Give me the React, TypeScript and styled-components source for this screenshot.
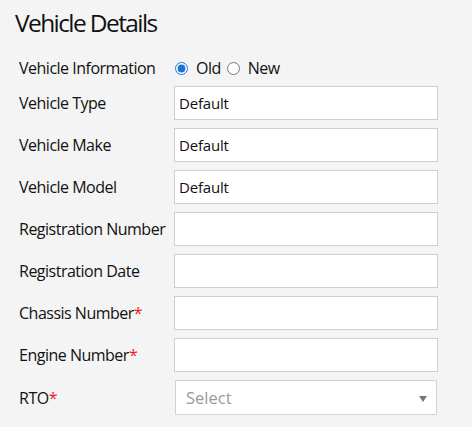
import React from "react";
import styled, { createGlobalStyle } from "styled-components";

const Global = createGlobalStyle`
  html, body { margin: 0; padding: 0; background: #f4f4f4; }
  body { font-family: "Open Sans", "Noto Sans", sans-serif; color: #111; }
`;

const Page = styled.div`
  padding: 6px 16px 0 15px;
`;

const Title = styled.h1`
  margin: 0;
  font-size: 24.5px;
  font-weight: 400;
  letter-spacing: -1.6px;
  line-height: 33px;
  color: #111;
`;

const Form = styled.div`
  margin-top: 19px;
  padding-left: 4px;
  display: grid;
  grid-template-columns: 155px 264px;
  row-gap: 8px;
  align-items: center;
`;

const Label = styled.label`
  font-size: 16px;
  line-height: 20px;
  letter-spacing: -0.5px;
  color: #111;
  white-space: nowrap;
`;

const Star = styled.span`
  color: #f21818;
`;

const RadioGroup = styled.div`
  display: flex;
  align-items: center;
  height: 20px;
  font-size: 16px;
  line-height: 20px;
  letter-spacing: -0.5px;
`;

const RadioLabel = styled.label`
  display: flex;
  align-items: center;
  margin-right: 5px;
`;

const Radio = styled.input`
  width: 13px;
  height: 13px;
  margin: 0 8px 0 1px;
  accent-color: #1a76d6;
`;

const TextInput = styled.input`
  box-sizing: border-box;
  width: 264px;
  height: 34px;
  border: 1px solid #cfcfcf;
  background: #fff;
  padding: 0 4px;
  font-family: "Open Sans", "Noto Sans", sans-serif;
  font-size: 15px;
  letter-spacing: -0.2px;
  color: #111;
  outline: none;
`;

const SelectBox = styled.div`
  box-sizing: border-box;
  position: relative;
  width: 262px;
  height: 35px;
  margin-left: 1px;
  border: 1px solid #d2d2d2;
  background: #fff;
  display: flex;
  align-items: center;
  padding-left: 10px;
  font-size: 16.5px;
  color: #9a9a9a;
`;

const Arrow = styled.span`
  position: absolute;
  right: 9px;
  top: 15px;
  width: 0;
  height: 0;
  border-left: 4px solid transparent;
  border-right: 4px solid transparent;
  border-top: 6px solid #777;
`;

const fields: { label: string; value: string; required?: boolean }[] = [
  { label: "Vehicle Type", value: "Default" },
  { label: "Vehicle Make", value: "Default" },
  { label: "Vehicle Model", value: "Default" },
  { label: "Registration Number", value: "" },
  { label: "Registration Date", value: "" },
  { label: "Chassis Number", value: "", required: true },
  { label: "Engine Number", value: "", required: true },
];

export default function App() {
  return (
    <Page>
      <Global />
      <Title>Vehicle Details</Title>
      <Form>
        <Label>Vehicle Information</Label>
        <RadioGroup>
          <RadioLabel>
            <Radio type="radio" name="info" defaultChecked />
            Old
          </RadioLabel>
          <RadioLabel>
            <Radio type="radio" name="info" />
            New
          </RadioLabel>
        </RadioGroup>
        {fields.map((f) => (
          <React.Fragment key={f.label}>
            <Label>
              {f.label}
              {f.required && <Star>*</Star>}
            </Label>
            <TextInput defaultValue={f.value} />
          </React.Fragment>
        ))}
        <Label>
          RTO<Star>*</Star>
        </Label>
        <SelectBox>
          Select
          <Arrow />
        </SelectBox>
      </Form>
    </Page>
  );
}
